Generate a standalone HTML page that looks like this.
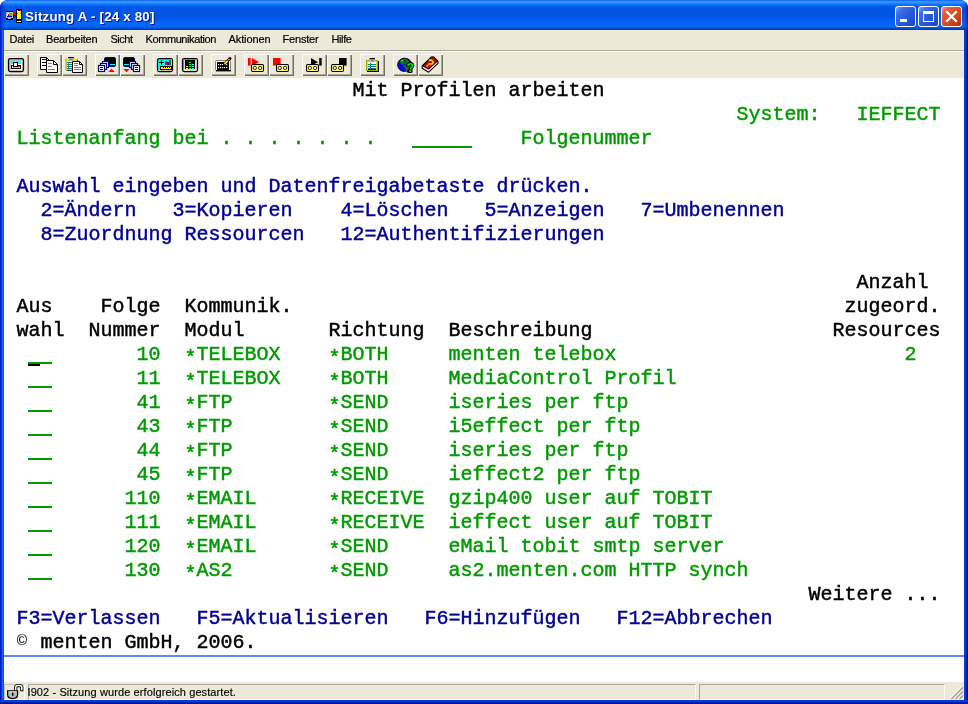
<!DOCTYPE html>
<html lang="de">
<head>
<meta charset="utf-8">
<title>Sitzung A - [24 x 80]</title>
<style>
html,body{margin:0;padding:0;}
body{width:968px;height:704px;overflow:hidden;background:#fff;font-family:"Liberation Sans",sans-serif;position:relative;}
#win{will-change:transform;position:absolute;left:0;top:0;width:968px;height:704px;border-radius:8px 8px 0 0;overflow:hidden;
 background:linear-gradient(to right,#0019cf 0,#0019cf 1px,#0831d9 1px,#0831d9 2px,#166aee 2px,#166aee 3px,#0855dd 3px,#0855dd 4px,#0855dd 964px,#0038e6 964px,#0038e6 965px,#0040d8 965px,#0040d8 966px,#001ea4 966px,#001ea4 967px,#00138c 967px);}
#tb{position:absolute;left:0;top:0;width:968px;height:30px;
 background:linear-gradient(to bottom,#0058ee 0px,#2f86fa 1px,#3f96ff 2px,#2a8bff 3px,#127dff 4px,#036ffc 5px,#0262ee 6px,#0057e5 7px,#0054e3 9px,#0055e6 17px,#005bf0 20px,#0266fc 23px,#0068ff 25px,#0062f2 27px,#0054dc 28px,#003fbd 29px,#0038b0 30px);}
#tb:before{content:"";position:absolute;left:0;top:0;width:5px;height:30px;background:linear-gradient(to right,rgba(0,25,190,.9) 0,rgba(0,40,200,.45) 2px,rgba(0,60,220,0) 5px)}
#tb:after{content:"";position:absolute;right:0;top:0;width:5px;height:30px;background:linear-gradient(to left,rgba(0,25,180,.9) 0,rgba(0,40,200,.4) 2px,rgba(0,60,220,0) 5px)}
#ttl{position:absolute;left:25px;top:9px;font:bold 13.3px/16px "Liberation Sans",sans-serif;color:#fff;text-shadow:1px 1px #0f1089;white-space:pre;letter-spacing:.2px}
#ico{position:absolute;left:6px;top:9px}
.cb{position:absolute;top:6px;width:21px;height:21px;box-sizing:border-box;border:1px solid #fff;border-radius:3px;
 background:linear-gradient(135deg,#7fa4f3 0%,#3d6fe6 22%,#2a5bdc 50%,#1f4ed2 80%,#1c46c0 100%);}
#bmin{left:895px}#bmax{left:918px}
#bcls{left:941px;background:linear-gradient(135deg,#f0987a 0%,#e2603a 22%,#dd4c22 50%,#cc3a10 80%,#b02c08 100%);}
#bot{position:absolute;left:0;top:700px;width:968px;height:4px;background:linear-gradient(to bottom,#0038e6 0,#0038e6 1px,#0040d8 1px,#0040d8 2px,#001ea4 2px,#001ea4 3px,#00138c 3px,#00138c 4px)}
#menu{position:absolute;left:4px;top:30px;width:960px;height:20px;background:#ece9d8;font:11px/18px "Liberation Sans",sans-serif;color:#000}
#menu span{position:absolute;top:0;white-space:pre;-webkit-text-stroke:.2px #000}
#sep{position:absolute;left:4px;top:50px;width:960px;height:2px;background:#fff;border-top:1px solid #aca899;box-sizing:border-box}
#tool{position:absolute;left:4px;top:52px;width:960px;height:26px;background:#ece9d8}
.bt{position:absolute;top:2px;width:25px;height:22px;background:#ece9d8;box-shadow:inset 1px 1px #fff,inset -1px -1px #716f64,inset -2px -2px #aca899}
.bt svg{position:absolute;left:0;top:0}
#term{position:absolute;left:4px;top:78px;width:960px;height:604px;background:#fff;overflow:hidden;
 font-family:"Liberation Mono",monospace;font-size:20px;line-height:25.4px;letter-spacing:0}
#term span{position:absolute;white-space:pre;height:24px;margin-left:.4px;-webkit-text-stroke:0.45px}
#term .k{color:#000}#term .g{color:#009900}#term .b{color:#000094}
#term b{font-weight:normal;position:relative}#term b.a{top:4px}#term b.c{display:inline-block;width:12px;text-align:center;font-size:15px;line-height:1px;top:-3px;-webkit-text-stroke:0;transform:scaleX(1.15)}
#term i.u{position:absolute;height:2px;background:#009900}
#cur{position:absolute;left:24px;top:286px;width:12px;height:2px;background:#000}
#oia{position:absolute;left:0;top:577px;width:960px;height:2px;background:#6986ee}
#stat{position:absolute;left:4px;top:682px;width:960px;height:18px;background:#ece9d8;font:11px/14px "Liberation Sans",sans-serif;color:#000}
.pn{position:absolute;top:2px;height:16px;box-sizing:border-box;border:1px solid;border-color:#aca899 #fff #fff #aca899;white-space:pre;padding-left:1px}
</style>
</head>
<body>
<div id="win">
<div id="tb">
 <svg id="ico" width="16" height="14" viewBox="0 0 16 14" shape-rendering="crispEdges"><rect x="0" y="2" width="7" height="1" fill="#000"/><rect x="0" y="3" width="7" height="6" fill="#c0c0c0"/><rect x="1" y="4" width="5" height="4" fill="#fff"/><rect x="1" y="4" width="1" height="2" fill="#ffee00"/><rect x="3" y="4" width="2.6" height="2.6" fill="#00e800"/><rect x="2" y="5" width="1" height="1" fill="#ff0000"/><path d="M1 8V7L2.6 5.8L4 7H6V8Z" fill="#0000e0"/><rect x="0" y="9" width="7" height="2" fill="#000"/><rect x="2" y="9" width="3" height="1" fill="#c0c0c0"/><rect x="7" y="5" width="1" height="4" fill="#000"/><path d="M7 6.6L8.3 4.2L9 6.2L10 5.6" stroke="#000" stroke-width="1.2" fill="none" shape-rendering="auto" transform="translate(.3 .9)"/><path d="M7 6.2L8.3 3.8L9 5.8L10 5.2" stroke="#ff0000" stroke-width="1.2" fill="none" shape-rendering="auto"/><rect x="10" y="0" width="6" height="14" fill="#000"/><rect x="11" y="1" width="4" height="9" fill="#ffff00"/><rect x="12" y="1" width="2" height="1" fill="#000"/><rect x="14" y="1" width="1" height="1" fill="#ff0000"/><rect x="11" y="4" width="1" height="1" fill="#00d000"/><rect x="14" y="4" width="1" height="1" fill="#00d000"/><rect x="11" y="12" width="4" height="1" fill="#ffff00"/></svg>
 <div id="ttl">Sitzung A - [24 x 80]</div>
 <div class="cb" id="bmin"><svg width="19" height="19" viewBox="0 0 19 19"><rect x="4" y="12" width="7" height="3" fill="#fff"/></svg></div>
 <div class="cb" id="bmax"><svg width="19" height="19" viewBox="0 0 19 19"><path d="M4 4h11v11h-11z M5 7v7h9v-7z" fill="#fff" fill-rule="evenodd"/></svg></div>
 <div class="cb" id="bcls"><svg width="19" height="19" viewBox="0 0 19 19"><path d="M5 5l9 9M14 5l-9 9" stroke="#fff" stroke-width="2.2" stroke-linecap="square"/></svg></div>
</div>
<div id="menu"><span style="left:5.5px;letter-spacing:-0.24px">Datei</span><span style="left:42px;letter-spacing:-0.17px">Bearbeiten</span><span style="left:106.5px;letter-spacing:-0.5px">Sicht</span><span style="left:141.5px;letter-spacing:-0.41px">Kommunikation</span><span style="left:224.5px;letter-spacing:-0.1px">Aktionen</span><span style="left:278.5px;letter-spacing:-0.19px">Fenster</span><span style="left:327.5px;letter-spacing:-0.4px">Hilfe</span></div>
<div id="sep"></div>
<div id="tool">
<div class="bt" style="left:0px"><svg width="25" height="22" viewBox="0 0 25 22"><rect x="4.5" y="4.5" width="15" height="13" rx="1.8" fill="#c0c0c0" stroke="#000" stroke-width="1.25"/><rect x="6" y="6" width="12" height="10" fill="#fff"/><rect x="6" y="6" width="12" height="1" fill="#c0c0c0"/><rect x="6" y="6" width="1" height="10" fill="#c0c0c0"/><rect x="7" y="7" width="10" height="3" fill="#00ffff"/><rect x="7.5" y="11.5" width="9" height="3" fill="#fff" stroke="#000"/><rect x="9.5" y="8.5" width="4" height="4" fill="#fff" stroke="#000"/><rect x="9" y="13" width="6" height="1" fill="#c0c0c0"/><rect x="14" y="12" width="2" height="1" fill="#ff0000"/></svg></div>
<div class="bt" style="left:33px"><svg width="25" height="22" viewBox="0 0 25 22"><path d="M3.5 3.5H9.5L12.5 6.5V15.5H3.5Z" fill="#fff" stroke="#000"/><path d="M9.5 3.5V6.5H12.5" fill="none" stroke="#000"/><rect x="5" y="5" width="4" height="1" fill="#000"/><rect x="5" y="8" width="4" height="1" fill="#000"/><rect x="5" y="11" width="4" height="1" fill="#000"/><path d="M9.5 6.5H16.5L20.5 10.5V18.5H9.5Z" fill="#fff" stroke="#000"/><path d="M16.5 6.5V10.5H20.5" fill="none" stroke="#000"/><rect x="11" y="9" width="4" height="1" fill="#808080"/><rect x="11" y="12" width="4" height="1" fill="#808080"/><rect x="11" y="15" width="7" height="1" fill="#808080"/></svg></div>
<div class="bt" style="left:58px"><svg width="25" height="22" viewBox="0 0 25 22"><rect x="4.4" y="5.4" width="11.4" height="11.4" fill="#000"/><rect x="3.6" y="4.7" width="11.6" height="11.4" fill="#e8e000"/><rect x="3.6" y="4.7" width=".8" height="11.4" fill="#9090b0"/><rect x="5" y="7" width="9" height="8" fill="#008080"/><rect x="5" y="7" width="9" height="1" fill="#fff"/><rect x="5" y="9" width="9" height="1" fill="#fff"/><rect x="5" y="11" width="9" height="1" fill="#fff"/><rect x="5" y="13" width="9" height="1" fill="#fff"/><rect x="6.2" y="8" width="1" height="7" fill="#008080"/><rect x="6.2" y="3" width="5.8" height="1.4" fill="#000"/><rect x="6.2" y="4.4" width="5.8" height="2.4" fill="#d0d0d0"/><path d="M7 4.8L11 6.4M11 4.8L7 6.4" stroke="#707070" stroke-width=".7"/><path d="M10.5 7.5H17.5L20.5 10.5V18.5H10.5Z" fill="#fff" stroke="#000"/><path d="M17.5 7.5V10.5H20.5" fill="none" stroke="#000"/><rect x="12" y="9" width="4" height="1" fill="#808080"/><rect x="12" y="11" width="4" height="1" fill="#808080"/><rect x="12" y="13" width="7" height="1" fill="#808080"/><rect x="12" y="15" width="7" height="1" fill="#808080"/></svg></div>
<div class="bt" style="left:91px"><svg width="25" height="22" viewBox="0 0 25 22"><rect x="9.5" y="3.5" width="11" height="9" rx="1.5" fill="#000" stroke="#000080"/><rect x="15" y="10" width="5" height="1" fill="#00ffff"/><rect x="7.5" y="7.5" width="6" height="6" fill="#fff" stroke="#000080" stroke-width="1.2"/><rect x="5.5" y="9.5" width="6" height="6" fill="#fff" stroke="#000080" stroke-width="1.2"/><rect x="3.5" y="11.5" width="6" height="6" fill="#fff" stroke="#000080" stroke-width="1.2"/><rect x="5" y="13" width="3" height="1" fill="#000"/><rect x="5" y="15" width="3" height="1" fill="#000"/><path d="M16.5 14.8L19.8 18H13.2Z" fill="#ff0000"/></svg></div>
<div class="bt" style="left:116px"><svg width="25" height="22" viewBox="0 0 25 22"><rect x="3.5" y="3.5" width="11" height="9" rx="1.5" fill="#000" stroke="#000080"/><rect x="4" y="10" width="5" height="1" fill="#00ffff"/><rect x="9.5" y="7.5" width="6" height="6" fill="#fff" stroke="#000080" stroke-width="1.2"/><rect x="11.5" y="9.5" width="6" height="6" fill="#fff" stroke="#000080" stroke-width="1.2"/><rect x="13.5" y="11.5" width="6" height="6" fill="#fff" stroke="#000080" stroke-width="1.2"/><rect x="15" y="13" width="3" height="1" fill="#000"/><rect x="15" y="15" width="3" height="1" fill="#000"/><path d="M3.4 15H9.8L6.6 18.2Z" fill="#ff0000"/></svg></div>
<div class="bt" style="left:149px"><svg width="25" height="22" viewBox="0 0 25 22"><rect x="4.5" y="4.5" width="15" height="13" rx="1.8" fill="#00ffff" stroke="#000" stroke-width="1.25"/><rect x="18" y="5" width="1" height="12" fill="#c0c0c0"/><rect x="5" y="16" width="14" height="1" fill="#c0c0c0"/><rect x="6" y="8" width="5" height="1" fill="#000"/><rect x="8" y="6" width="1" height="5" fill="#000"/><rect x="12" y="7" width="2" height="4" fill="#ff0000"/><rect x="14" y="8" width="2" height="3" fill="#0000ff"/><rect x="16" y="6" width="2" height="5" fill="#008000"/><rect x="7.5" y="12.5" width="11" height="3" fill="#ffee00" stroke="#000"/><rect x="10" y="13" width="1" height="1" fill="#000"/><rect x="12" y="13" width="1" height="1" fill="#000"/><rect x="14" y="13" width="1" height="1" fill="#000"/><rect x="16" y="13" width="1" height="1" fill="#000"/></svg></div>
<div class="bt" style="left:174px"><svg width="25" height="22" viewBox="0 0 25 22"><rect x="4.5" y="4.5" width="15" height="13" rx="1.8" fill="#d8d8d8" stroke="#000" stroke-width="1.25"/><rect x="5" y="5" width="14" height="1" fill="#808080"/><rect x="5" y="5" width="1" height="12" fill="#808080"/><rect x="7" y="6" width="10" height="9" fill="#000"/><rect x="8" y="12" width="2" height="1" fill="#ffee00"/><rect x="8" y="14" width="2" height="1" fill="#ffee00"/><rect x="11" y="8" width="2" height="1" fill="#00ff00"/><rect x="11" y="10" width="2" height="1" fill="#00ff00"/><rect x="11" y="12" width="2" height="1" fill="#00ff00"/><rect x="11" y="14" width="2" height="1" fill="#00ff00"/><rect x="14" y="10" width="2" height="1" fill="#00ffff"/><rect x="14" y="12" width="2" height="1" fill="#00ffff"/><rect x="14" y="14" width="2" height="1" fill="#00ffff"/></svg></div>
<div class="bt" style="left:207px"><svg width="25" height="22" viewBox="0 0 25 22"><rect x="4.5" y="6.5" width="15" height="10" rx="1" fill="#fff" stroke="#808080"/><rect x="6" y="8" width="12" height="8" fill="#000"/><rect x="5" y="16" width="15" height="1.4" fill="#000"/><rect x="7" y="10" width="1.2" height="1.2" fill="#fff"/><rect x="9" y="10" width="1.2" height="1.2" fill="#fff"/><rect x="11" y="10" width="1.2" height="1.2" fill="#fff"/><rect x="13" y="10" width="1.2" height="1.2" fill="#fff"/><rect x="15" y="10" width="1.2" height="1.2" fill="#fff"/><rect x="7" y="13" width="1.2" height="1.2" fill="#fff"/><rect x="9" y="13" width="1.2" height="1.2" fill="#fff"/><rect x="11" y="13" width="1.2" height="1.2" fill="#fff"/><rect x="13" y="13" width="1.2" height="1.2" fill="#fff"/><rect x="15" y="13" width="1.2" height="1.2" fill="#fff"/><path d="M13.5 10L19 4.5" stroke="#000" stroke-width="3" stroke-linecap="round"/><path d="M14 9.5L16.2 7.3" stroke="#f0f000" stroke-width="1.8" stroke-linecap="round"/><path d="M17.2 6.3L18.6 4.9" stroke="#ff2020" stroke-width="1.6"/><path d="M17.7 5.8L18.1 5.4" stroke="#fff" stroke-width="1.2"/></svg></div>
<div class="bt" style="left:240px"><svg width="25" height="22" viewBox="0 0 25 22"><rect x="4" y="4" width="2.7" height="7.6" fill="#ff0000"/><path d="M8 4L15 8.2L8 11.8Z" fill="#ff0000"/><rect x="7.5" y="10.5" width="12" height="7" rx="1.2" fill="#fff570" stroke="#000" stroke-width="1.1"/><circle cx="10.8" cy="13.9" r="1.65" fill="#fff" stroke="#000" stroke-width=".85"/><circle cx="16.1" cy="13.9" r="1.65" fill="#fff" stroke="#000" stroke-width=".85"/></svg></div>
<div class="bt" style="left:265px"><svg width="25" height="22" viewBox="0 0 25 22"><rect x="4" y="4" width="7.6" height="7.6" fill="#ff0000"/><rect x="7.5" y="10.5" width="12" height="7" rx="1.2" fill="#fff570" stroke="#000" stroke-width="1.1"/><circle cx="10.8" cy="13.9" r="1.65" fill="#fff" stroke="#000" stroke-width=".85"/><circle cx="16.1" cy="13.9" r="1.65" fill="#fff" stroke="#000" stroke-width=".85"/></svg></div>
<div class="bt" style="left:298px"><svg width="25" height="22" viewBox="0 0 25 22"><path d="M9 4L16 8.2L9 11.8Z" fill="#000"/><rect x="17.2" y="4" width="2.5" height="7.6" fill="#000"/><rect x="4.5" y="10.5" width="12" height="7" rx="1.2" fill="#fff570" stroke="#000" stroke-width="1.1"/><circle cx="7.8" cy="13.9" r="1.65" fill="#fff" stroke="#000" stroke-width=".85"/><circle cx="13.1" cy="13.9" r="1.65" fill="#fff" stroke="#000" stroke-width=".85"/></svg></div>
<div class="bt" style="left:323px"><svg width="25" height="22" viewBox="0 0 25 22"><rect x="12" y="4" width="7.6" height="7.6" fill="#000"/><rect x="4.5" y="10.5" width="12" height="7" rx="1.2" fill="#fff570" stroke="#000" stroke-width="1.1"/><circle cx="7.8" cy="13.9" r="1.65" fill="#fff" stroke="#000" stroke-width=".85"/><circle cx="13.1" cy="13.9" r="1.65" fill="#fff" stroke="#000" stroke-width=".85"/></svg></div>
<div class="bt" style="left:356px"><svg width="25" height="22" viewBox="0 0 25 22"><rect x="7" y="7" width="12" height="11" fill="#000"/><rect x="6" y="6" width="12" height="11" fill="#e8e000"/><rect x="6.5" y="6.5" width="11" height="10" fill="none" stroke="#807800" stroke-width=".6"/><rect x="8" y="8" width="8" height="8" fill="#fff"/><rect x="8" y="10" width="8" height="1" fill="#008080"/><rect x="8" y="12" width="8" height="1" fill="#008080"/><rect x="8" y="14" width="8" height="1.6" fill="#008080"/><rect x="10" y="9" width="1" height="6" fill="#008080"/><rect x="8" y="15.2" width="8" height=".8" fill="#000"/><rect x="9.5" y="4" width="5.5" height="1.6" fill="#000"/><rect x="9.5" y="5.6" width="5.5" height="2.6" fill="#d0d0d0"/><path d="M10.5 6L14 7.6M14 6L10.5 7.6" stroke="#707070" stroke-width=".7"/></svg></div>
<div class="bt" style="left:389px"><svg width="25" height="22" viewBox="0 0 25 22"><path d="M13 4L16 5L21 10.5L19.5 15L19.5 18.5L14 18.5Z" fill="#000"/><circle cx="11.3" cy="10.8" r="6.6" fill="#0000ff" stroke="#000" stroke-width="1"/><path d="M8 5.5L13 4.6L16 7L15 9L16.5 11L14 11.5L11 9.5L10.5 11L8 10L6.5 7.5Z" fill="#008000"/><path d="M10 12L13 11L16.5 12.5L16 15.5L13.5 17L12 16L12 14Z" fill="#008000"/><path d="M8 6.5L9.6 6L9.2 7.8Z" fill="#fff"/><rect x="11.4" y="6.6" width="1.2" height="1.2" fill="#0000c0"/><text x="13.6" y="18.4" font-family="Liberation Sans,sans-serif" font-weight="bold" font-size="12.5" fill="#00ee00" stroke="#000" stroke-width="1.8" paint-order="stroke" stroke-linejoin="round">?</text></svg></div>
<div class="bt" style="left:414px"><svg width="25" height="22" viewBox="0 0 25 22"><path d="M13.4 3H15.6L20 7.3V9.4L10.6 18.2L4.2 14.3V12Z" fill="#fff" stroke="#000" stroke-width="1.1" stroke-linejoin="round"/><path d="M13.5 3.2H15.5L19.6 7.2L10.6 15.3L4.8 11.9Z" fill="#c80000" stroke="#000" stroke-width=".9" stroke-linejoin="round"/><text transform="translate(11.7 9.4) rotate(40)" x="0" y="4.2" text-anchor="middle" font-family="Liberation Sans,sans-serif" font-weight="bold" font-size="12" fill="#ffee00">?</text></svg></div>
</div>
<div id="term">
<span class="k" style="left:348px;top:0px">Mit Profilen arbeiten</span>
<span class="g" style="left:732px;top:24px">System:</span>
<span class="g" style="left:852px;top:24px">IEFFECT</span>
<span class="g" style="left:12px;top:48px">Listenanfang bei . . . . . . .</span>
<i class="u" style="left:408px;top:68px;width:60px"></i>
<span class="g" style="left:516px;top:48px">Folgenummer</span>
<span class="b" style="left:12px;top:96px">Auswahl eingeben und Datenfreigabetaste drücken.</span>
<span class="b" style="left:36px;top:120px">2=Ändern</span>
<span class="b" style="left:168px;top:120px">3=Kopieren</span>
<span class="b" style="left:336px;top:120px">4=Löschen</span>
<span class="b" style="left:480px;top:120px">5=Anzeigen</span>
<span class="b" style="left:636px;top:120px">7=Umbenennen</span>
<span class="b" style="left:36px;top:144px">8=Zuordnung Ressourcen</span>
<span class="b" style="left:336px;top:144px">12=Authentifizierungen</span>
<span class="k" style="left:852px;top:192px">Anzahl</span>
<span class="k" style="left:12px;top:216px">Aus</span>
<span class="k" style="left:96px;top:216px">Folge</span>
<span class="k" style="left:180px;top:216px">Kommunik.</span>
<span class="k" style="left:840px;top:216px">zugeord.</span>
<span class="k" style="left:12px;top:240px">wahl</span>
<span class="k" style="left:84px;top:240px">Nummer</span>
<span class="k" style="left:180px;top:240px">Modul</span>
<span class="k" style="left:324px;top:240px">Richtung</span>
<span class="k" style="left:444px;top:240px">Beschreibung</span>
<span class="k" style="left:828px;top:240px">Resources</span>
<i class="u" style="left:24px;top:284px;width:24px"></i>
<span class="g" style="left:132px;top:264px">10</span>
<span class="g" style="left:180px;top:264px"><b class="a">*</b>TELEBOX</span>
<span class="g" style="left:324px;top:264px"><b class="a">*</b>BOTH</span>
<span class="g" style="left:444px;top:264px">menten telebox</span>
<span class="g" style="left:900px;top:264px">2</span>
<i class="u" style="left:24px;top:308px;width:24px"></i>
<span class="g" style="left:132px;top:288px">11</span>
<span class="g" style="left:180px;top:288px"><b class="a">*</b>TELEBOX</span>
<span class="g" style="left:324px;top:288px"><b class="a">*</b>BOTH</span>
<span class="g" style="left:444px;top:288px">MediaControl Profil</span>
<i class="u" style="left:24px;top:332px;width:24px"></i>
<span class="g" style="left:132px;top:312px">41</span>
<span class="g" style="left:180px;top:312px"><b class="a">*</b>FTP</span>
<span class="g" style="left:324px;top:312px"><b class="a">*</b>SEND</span>
<span class="g" style="left:444px;top:312px">iseries per ftp</span>
<i class="u" style="left:24px;top:356px;width:24px"></i>
<span class="g" style="left:132px;top:336px">43</span>
<span class="g" style="left:180px;top:336px"><b class="a">*</b>FTP</span>
<span class="g" style="left:324px;top:336px"><b class="a">*</b>SEND</span>
<span class="g" style="left:444px;top:336px">i5effect per ftp</span>
<i class="u" style="left:24px;top:380px;width:24px"></i>
<span class="g" style="left:132px;top:360px">44</span>
<span class="g" style="left:180px;top:360px"><b class="a">*</b>FTP</span>
<span class="g" style="left:324px;top:360px"><b class="a">*</b>SEND</span>
<span class="g" style="left:444px;top:360px">iseries per ftp</span>
<i class="u" style="left:24px;top:404px;width:24px"></i>
<span class="g" style="left:132px;top:384px">45</span>
<span class="g" style="left:180px;top:384px"><b class="a">*</b>FTP</span>
<span class="g" style="left:324px;top:384px"><b class="a">*</b>SEND</span>
<span class="g" style="left:444px;top:384px">ieffect2 per ftp</span>
<i class="u" style="left:24px;top:428px;width:24px"></i>
<span class="g" style="left:120px;top:408px">110</span>
<span class="g" style="left:180px;top:408px"><b class="a">*</b>EMAIL</span>
<span class="g" style="left:324px;top:408px"><b class="a">*</b>RECEIVE</span>
<span class="g" style="left:444px;top:408px">gzip400 user auf TOBIT</span>
<i class="u" style="left:24px;top:452px;width:24px"></i>
<span class="g" style="left:120px;top:432px">111</span>
<span class="g" style="left:180px;top:432px"><b class="a">*</b>EMAIL</span>
<span class="g" style="left:324px;top:432px"><b class="a">*</b>RECEIVE</span>
<span class="g" style="left:444px;top:432px">ieffect user auf TOBIT</span>
<i class="u" style="left:24px;top:476px;width:24px"></i>
<span class="g" style="left:120px;top:456px">120</span>
<span class="g" style="left:180px;top:456px"><b class="a">*</b>EMAIL</span>
<span class="g" style="left:324px;top:456px"><b class="a">*</b>SEND</span>
<span class="g" style="left:444px;top:456px">eMail tobit smtp server</span>
<i class="u" style="left:24px;top:500px;width:24px"></i>
<span class="g" style="left:120px;top:480px">130</span>
<span class="g" style="left:180px;top:480px"><b class="a">*</b>AS2</span>
<span class="g" style="left:324px;top:480px"><b class="a">*</b>SEND</span>
<span class="g" style="left:444px;top:480px">as2.menten.com HTTP synch</span>
<span class="k" style="left:804px;top:504px">Weitere ...</span>
<span class="b" style="left:12px;top:528px">F3=Verlassen</span>
<span class="b" style="left:192px;top:528px">F5=Aktualisieren</span>
<span class="b" style="left:420px;top:528px">F6=Hinzufügen</span>
<span class="b" style="left:612px;top:528px">F12=Abbrechen</span>
<span class="k" style="left:12px;top:552px"><b class="c">©</b> menten GmbH, 2006.</span>
<div id="cur"></div>
<div id="oia"></div>
</div>
<div id="stat">
 <div class="pn" style="left:0;width:21px;border-color:#c8c5b4 #fff #fff #c8c5b4"></div>
 <svg style="position:absolute;left:0;top:0" width="24" height="18" viewBox="0 0 24 18"><path d="M11.7 9.5V5.6Q11.7 3.6 14 3.6H15.4Q17.8 3.6 17.8 5.6V9.2" fill="none" stroke="#000" stroke-width="3.2" stroke-linecap="butt"/><path d="M11.7 9.8V5.6Q11.7 3.6 14 3.6H15.4Q17.8 3.6 17.8 5.6V8.3" fill="none" stroke="#fff" stroke-width="1.5"/><path d="M3.6 8.8H13.6V12.6Q13.6 16.6 8.6 16.6Q3.6 16.6 3.6 12.6Z" fill="#b8b8b8" stroke="#000" stroke-width="1.2"/><path d="M4.6 9.8H12.6" stroke="#e8e8e8" stroke-width="1"/><rect x="8" y="10.6" width="1.4" height="3.2" fill="#000"/></svg>
 <div class="pn" style="left:24px;width:668px;border-color:#a9a694 #fff #fff #a9a694;padding-left:0;text-indent:-1.5px;letter-spacing:.1px;-webkit-text-stroke:.15px #000">I902 - Sitzung wurde erfolgreich gestartet.</div>
 <div class="pn" style="left:695px;width:246px;border-color:#a9a694 #fff #fff #a9a694"></div>
 <svg style="position:absolute;left:945px;top:3px" width="14" height="14" viewBox="0 0 14 14"><g stroke="#fff" stroke-width="1.3"><path d="M1.2 13.6L13.6 1.2M5.2 13.6L13.6 5.2M9.2 13.6L13.6 9.2"/></g><g stroke="#a5a293" stroke-width="1.5"><path d="M2.4 14L14 2.4M6.4 14L14 6.4M10.4 14L14 10.4"/></g></svg>
</div>
<div id="bot"></div>
</div>
</body>
</html>
